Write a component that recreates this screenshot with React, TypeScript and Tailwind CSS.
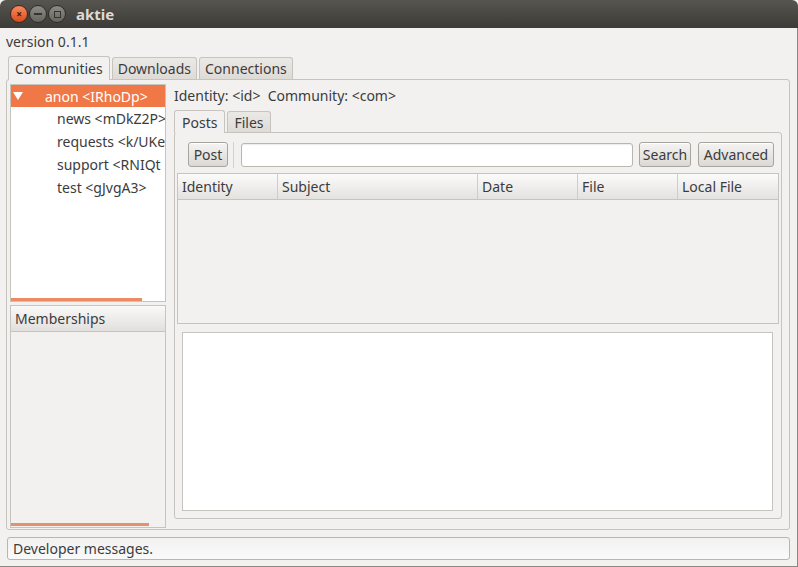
import React from 'react';

const font = { fontFamily: '"Noto Sans", "DejaVu Sans", sans-serif' };

const communities = [
  { name: 'anon <IRhoDp>', selected: true },
  { name: 'news <mDkZ2P>' },
  { name: 'requests <k/UKe' },
  { name: 'support <RNIQt' },
  { name: 'test <gJvgA3>' },
];

const columns = [
  { label: 'Identity', w: 'w-[100px]' },
  { label: 'Subject', w: 'w-[200px]' },
  { label: 'Date', w: 'w-[100px]' },
  { label: 'File', w: 'w-[100px]' },
  { label: 'Local File', w: 'flex-1' },
];

function Button({ label, w }: { label: string; w: string }) {
  return (
    <div className={`${w} h-[25px] shrink-0 flex items-center justify-center rounded-[3px] border border-[#a9a59e] bg-gradient-to-b from-[#f5f4f2] to-[#dcd9d5] text-[#3c3c3c] shadow-[inset_0_1px_0_#fff]`}>
      {label}
    </div>
  );
}

function TitleButton({ kind }: { kind: 'close' | 'min' | 'max' }) {
  if (kind === 'close') {
    return (
      <div className="w-[18px] h-[18px] rounded-full bg-gradient-to-b from-[#f68a5b] to-[#dc4a17] border border-[#3a2a20] flex items-center justify-center">
        <span className="text-[10px] leading-none text-[#3a1a0a] font-bold">×</span>
      </div>
    );
  }
  return (
    <div className="w-[18px] h-[18px] rounded-full bg-gradient-to-b from-[#8e8b84] to-[#67655f] border border-[#2e2d29] flex items-center justify-center">
      {kind === 'min' ? (
        <div className="w-[8px] h-[2px] bg-[#35342f]" />
      ) : (
        <div className="w-[7px] h-[7px] border-[1.5px] border-[#35342f]" />
      )}
    </div>
  );
}

export default function App() {
  return (
    <div className="w-[798px] h-[567px] flex flex-col bg-[#f2f1f0] text-[#3c3c3c] text-[14px] overflow-hidden" style={font}>
      {/* title bar */}
      <div className="h-[28px] shrink-0 flex items-center bg-gradient-to-b from-[#57554f] to-[#3c3b37] rounded-t-[6px] pl-[10px]">
        <div className="flex items-center gap-[1px]">
          <TitleButton kind="close" />
          <TitleButton kind="min" />
          <TitleButton kind="max" />
        </div>
        <span className="ml-[10px] text-[#dfdbd2] font-bold text-[15px]">aktie</span>
      </div>

      <div className="flex-1 flex flex-col border-r border-b border-[#8a8882] min-h-0">
        <div className="h-[27px] shrink-0 flex items-center pl-[6px]">version 0.1.1</div>

        {/* main notebook */}
        <div className="flex items-end pl-[8px] h-[24px] shrink-0 gap-[2px]">
          <div className="h-[24px] px-[6px] flex items-center bg-[#f2f1f0] border border-b-0 border-[#c7c4bf] rounded-t-[3px] relative z-10 -mb-px">Communities</div>
          <div className="h-[22px] px-[5px] flex items-center bg-gradient-to-b from-[#ebe9e6] to-[#dedbd7] border border-b-0 border-[#c7c4bf] rounded-t-[3px]">Downloads</div>
          <div className="h-[22px] px-[5px] flex items-center bg-gradient-to-b from-[#ebe9e6] to-[#dedbd7] border border-b-0 border-[#c7c4bf] rounded-t-[3px]">Connections</div>
        </div>
        <div className="ml-[6px] mr-[7px] h-[451px] shrink-0 border border-[#c7c4bf] rounded-[3px] flex pl-[3px] pt-[4px] pb-[1px]">
          {/* left column */}
          <div className="w-[156px] shrink-0 flex flex-col gap-[3px]">
            <div className="h-[218px] bg-white border border-[#c7c4bf] flex flex-col relative">
              {communities.map((c) =>
                c.selected ? (
                  <div key={c.name} className="h-[22px] flex items-center bg-[#f07746] text-white">
                    <span className="w-0 h-0 ml-[2px] border-l-[5px] border-r-[5px] border-t-[8px] border-l-transparent border-r-transparent border-t-white" />
                    <span className="ml-[22px] whitespace-nowrap">{c.name}</span>
                  </div>
                ) : (
                  <div key={c.name} className="h-[23px] flex items-center pl-[46px] whitespace-nowrap overflow-hidden">
                    {c.name}
                  </div>
                )
              )}
              <div className="absolute left-0 bottom-0 w-[131px] h-[3px] bg-[#ec8a63]" />
            </div>
            <div className="flex-1 border border-[#c7c4bf] flex flex-col relative">
              <div className="h-[26px] flex items-center pl-[4px] bg-gradient-to-b from-[#f9f9f8] to-[#e2e0dd] border-b border-[#c7c4bf]">Memberships</div>
              <div className="absolute left-0 bottom-[1px] w-[138px] h-[3px] bg-[#e4916f]" />
            </div>
          </div>

          {/* right column */}
          <div className="flex-1 min-w-0 flex flex-col pl-[8px] pr-[7px] pb-[9px]">
            <div className="h-[22px] flex items-center">Identity: &lt;id&gt;&nbsp; Community: &lt;com&gt;</div>
            <div className="flex items-end h-[25px] gap-[2px] mt-[1px]">
              <div className="h-[23px] px-[7px] flex items-center bg-[#f2f1f0] border border-b-0 border-[#c7c4bf] rounded-t-[3px] relative z-10 -mb-px">Posts</div>
              <div className="h-[21px] px-[6px] flex items-center bg-gradient-to-b from-[#ebe9e6] to-[#dedbd7] border border-b-0 border-[#c7c4bf] rounded-t-[3px]">Files</div>
            </div>
            <div className="flex-1 border border-[#c7c4bf] rounded-[3px] flex flex-col px-[2px] pt-[8px] pb-[7px]">
              <div className="h-[27px] flex items-center pl-[11px]">
                <Button label="Post" w="w-[40px]" />
                <div className="w-px h-[26px] shrink-0 bg-[#d4d1cc] ml-[5px] mr-[7px]" />
                <div className="w-[392px] shrink-0 h-[24px] bg-white border border-[#b9b5af] rounded-[3px] shadow-[inset_0_1px_1px_rgba(0,0,0,0.08)]" />
                <div className="ml-[6px]"><Button label="Search" w="w-[52px]" /></div>
                <div className="ml-[7px]"><Button label="Advanced" w="w-[76px]" /></div>
              </div>
              <div className="mt-[5px] h-[151px] border border-[#c7c4bf] flex flex-col">
                <div className="h-[26px] flex border-b border-[#c7c4bf] bg-gradient-to-b from-[#fbfbfa] to-[#e4e2df]">
                  {columns.map((c, i) => (
                    <div key={c.label} className={`${c.w} flex items-center pl-[4px] ${i < columns.length - 1 ? 'border-r border-[#d0cdc8]' : ''}`}>
                      {c.label}
                    </div>
                  ))}
                </div>
              </div>
              <div className="flex-1 mt-[8px] ml-[5px] mr-[6px] bg-white border border-[#c7c4bf]" />
            </div>
          </div>
        </div>

        {/* status bar */}
        <div className="mt-[7px] ml-[7px] mr-[7px] h-[23px] shrink-0 flex items-center pl-[5px] border border-[#b9b5af] rounded-[3px] bg-gradient-to-b from-[#f2f1f0] to-[#fafafa]">
          Developer messages.
        </div>
      </div>
    </div>
  );
}
